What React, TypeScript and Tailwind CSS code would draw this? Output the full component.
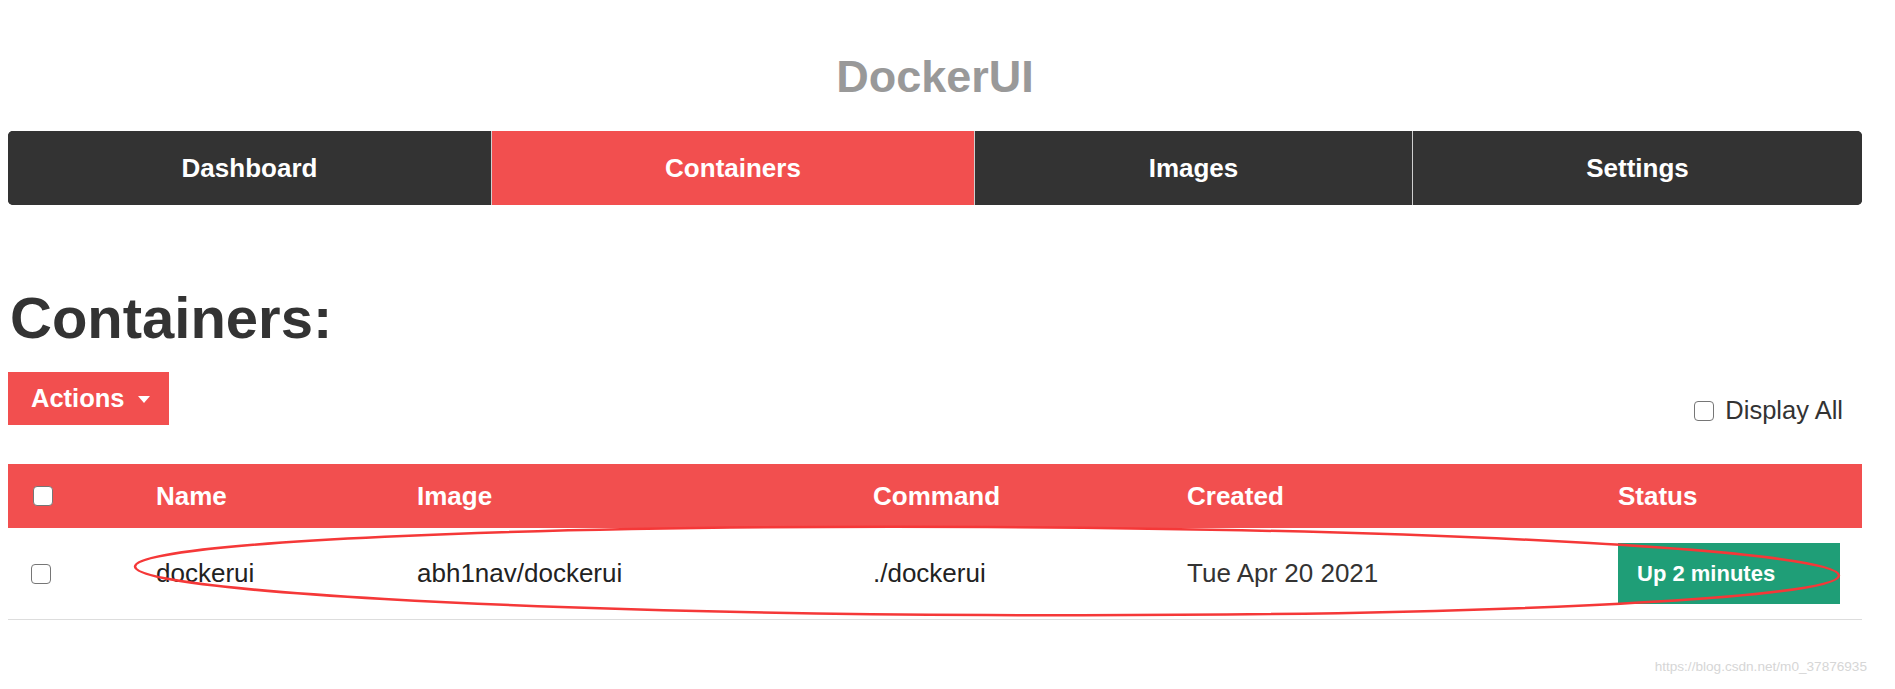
import React from 'react';

const tabs = [
  { label: 'Dashboard', width: 'w-[483px]', active: false },
  { label: 'Containers', width: 'w-[483px]', active: true },
  { label: 'Images', width: 'w-[438px]', active: false },
  { label: 'Settings', width: 'flex-1', active: false },
];

const columns = ['Name', 'Image', 'Command', 'Created', 'Status'];

const containers = [
  {
    name: 'dockerui',
    image: 'abh1nav/dockerui',
    command: './dockerui',
    created: 'Tue Apr 20 2021',
    status: 'Up 2 minutes',
  },
];

function Checkbox() {
  return <span className="block w-[20px] h-[20px] rounded-[4px] border-[1.5px] border-[#767676] bg-white" />;
}

export default function App() {
  const grid = 'grid grid-cols-[138px_261px_456px_314px_431px_1fr]';

  return (
    <div className="relative h-[689px] overflow-hidden bg-white font-['Liberation_Sans',Arial,sans-serif]">
      <div className="ml-[8px] mr-[33px] pt-[52px]">
        <h1 className="text-center text-[45px] leading-[50px] font-bold text-[#999999]">DockerUI</h1>

        <nav className="mt-[29px] flex h-[74px] rounded-[5px] overflow-hidden bg-[#333333]">
          {tabs.map((tab, i) => (
            <div
              key={tab.label}
              className={`${tab.width} flex items-center justify-center text-[26px] font-bold text-white ${
                tab.active ? 'bg-[#f24f4f]' : 'bg-[#333333]'
              } ${i > 0 ? 'border-l border-[#cfcfcf]' : ''}`}
            >
              {tab.label}
            </div>
          ))}
        </nav>

        <h2 className="mt-[81px] pl-[2px] text-[58px] leading-[64px] font-bold text-[#333333]">Containers:</h2>

        <div className="mt-[22px] flex items-end justify-between">
          <button className="flex h-[53px] w-[161px] items-center bg-[#f24f4f] pl-[23px] text-[25.5px] font-bold text-white">
            Actions
            <span className="ml-[13px] mt-[2px] h-0 w-0 border-x-[6px] border-t-[7px] border-x-transparent border-t-white" />
          </button>
          <label className="mr-[19px] flex items-center gap-[11px] text-[25.5px] leading-[29px] text-[#333333]">
            <Checkbox />
            Display All
          </label>
        </div>

        <div className="mt-[39px]">
          <div className={`${grid} h-[64px] items-center bg-[#f24f4f] text-[26px] font-bold text-white`}>
            <div className="pl-[25px]">
              <Checkbox />
            </div>
            {columns.map((c) => (
              <div key={c} className="pl-[10px]">
                {c}
              </div>
            ))}
          </div>
          {containers.map((c) => (
            <div
              key={c.name}
              className={`${grid} h-[92px] items-center border-b border-[#dddddd] text-[26px] text-[#222222]`}
            >
              <div className="pl-[23px]">
                <Checkbox />
              </div>
              <div className="pl-[10px]">{c.name}</div>
              <div className="pl-[10px]">{c.image}</div>
              <div className="pl-[10px]">{c.command}</div>
              <div className="pl-[10px] text-[#333333]">{c.created}</div>
              <div className="pl-[10px]">
                <span className="flex h-[61px] w-[222px] items-center bg-[#1f9e77] pl-[19px] text-[22px] font-bold text-white">
                  {c.status}
                </span>
              </div>
            </div>
          ))}
        </div>
      </div>

      <svg className="pointer-events-none absolute left-0 top-0" width="1895" height="689">
        <ellipse
          cx="987"
          cy="571"
          rx="852"
          ry="44"
          transform="rotate(0.3 987 571)"
          fill="none"
          stroke="#f53838"
          strokeWidth="2.5"
        />
      </svg>

      <div className="absolute right-[28px] top-[659px] text-[13.6px] leading-[16px] text-[#d6d6d6]">
        https://blog.csdn.net/m0_37876935
      </div>
    </div>
  );
}
